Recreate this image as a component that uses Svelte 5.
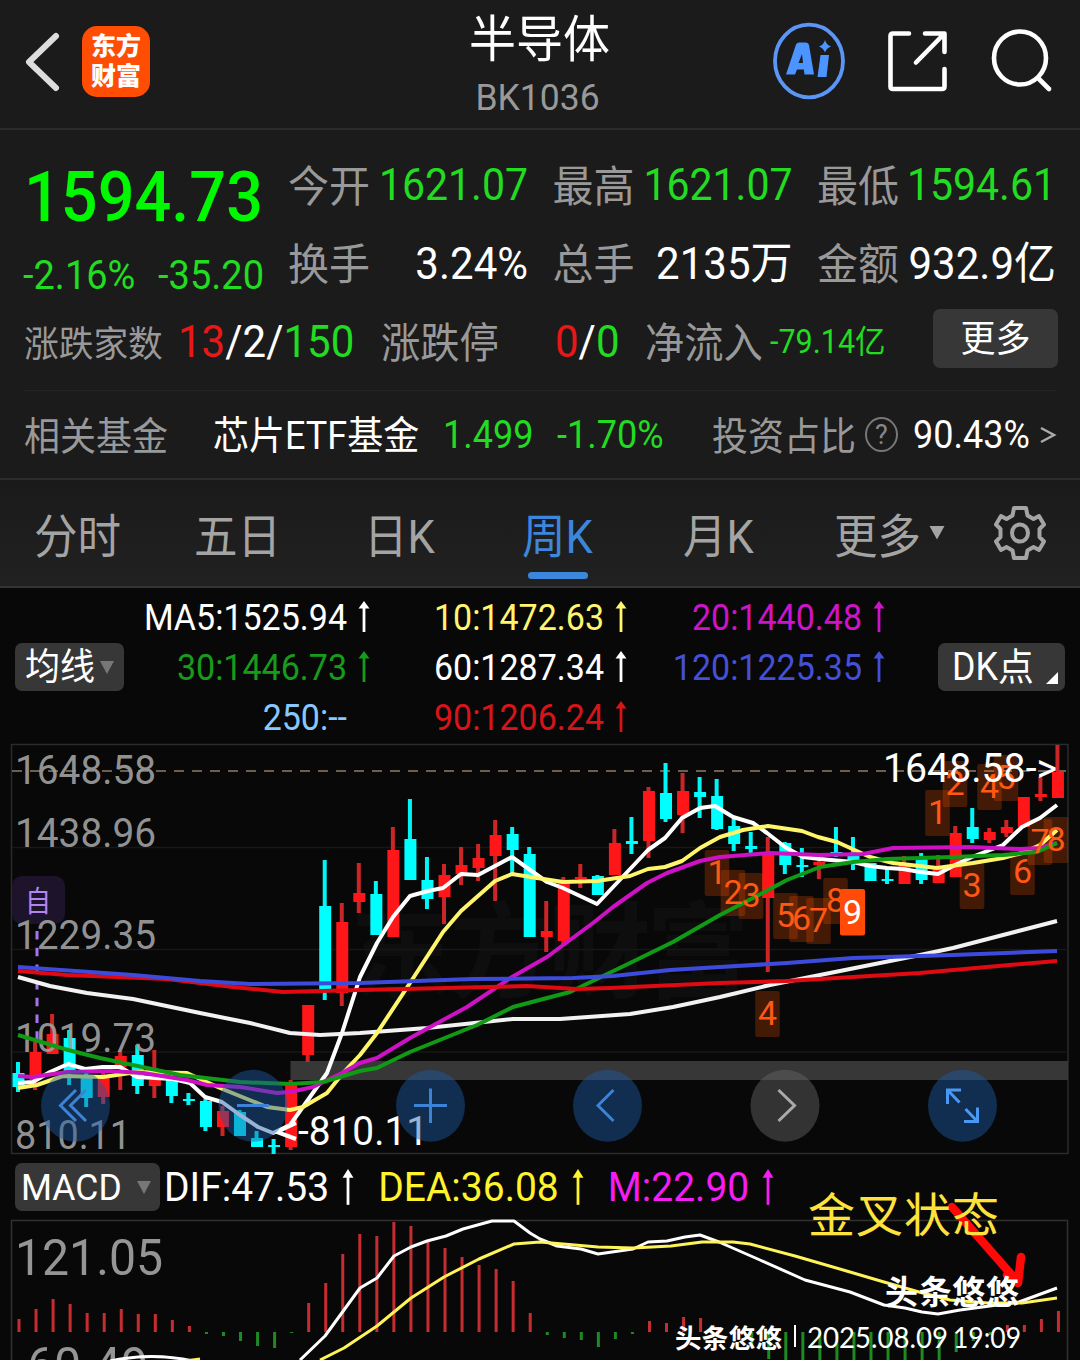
<script>
  const stats = [
    ['今开', '1621.07', 'down'], ['最高', '1621.07', 'down'], ['最低', '1594.61', 'down'],
    ['换手', '3.24%', 'flat'], ['总手', '2135万', 'flat'], ['金额', '932.9亿', 'flat']
  ];
  const tabs = ['分时', '五日', '日K', '周K', '月K'];

  const averages = [
    ['MA5:1525.94', 'white', true], ['10:1472.63', 'yellow', true], ['20:1440.48', 'magenta', true],
    ['30:1446.73', 'green', true], ['60:1287.34', 'white', true], ['120:1225.35', 'blue', true],
    ['250:--', 'sky', false], ['90:1206.24', 'red', true]
  ];
  const macd = [['DIF:47.53', 'white'], ['DEA:36.08', 'lemon'], ['M:22.90', 'pink']];

  const step = 17.04;
  const xAt = (i) => 18 + i * step;

  // [rising, high, low, body top, body bottom]
  const candles = [
    [0,1062,1092,1073,1087],[1,1042,1090,1052,1080],[1,1014,1054,1034,1054],[0,1030,1085,1038,1072],
    [0,1073,1107,1077,1098],[1,1073,1104,1078,1097],[1,1051,1090,1056,1067],[0,1045,1094,1055,1086],
    [1,1050,1098,1080,1086],[0,1075,1103,1078,1096],[0,1093,1105,1099,1101],[0,1099,1131,1101,1127],
    [1,1106,1136,1111,1127],[0,1110,1136,1112,1136],[0,1131,1147,1138,1147],[0,1139,1154,1145,1147],
    [1,1080,1150,1085,1147],[1,1005,1062,1005,1055],[0,860,1000,906,990],[1,903,1006,922,993],
    [1,863,913,893,902],[0,881,935,894,935],[1,827,937,850,937],[0,799,880,839,880],
    [0,857,909,880,899],[1,864,924,875,897],[1,847,885,865,874],[1,844,881,858,868],
    [1,820,901,835,856],[0,827,875,834,850],[0,847,937,854,937],[1,901,952,931,937],
    [1,877,944,883,941],[1,864,888,877,879],[0,875,895,876,895],[1,829,875,843,875],
    [0,817,854,841,844],[1,787,858,791,841],[0,763,822,793,819],[1,773,833,791,815],
    [0,777,818,792,797],[0,779,830,796,829],[0,819,851,826,844],[0,832,853,846,849],
    [1,837,972,855,898],[0,842,874,843,865],[0,848,877,865,867],[1,857,879,862,865],
    [0,827,857,852,855],[0,837,870,855,861],[0,863,881,863,881],[0,869,884,879,881],
    [1,856,884,863,884],[0,853,884,858,880],[1,855,883,868,883],[1,826,877,833,877],
    [0,808,843,827,839],[1,828,843,832,840],[1,820,837,827,833],[1,797,827,797,827],
    [1,777,801,794,797],[1,745,798,772,798]
  ];

  const lines = [
    ['#f2f2f2', '18,977 50,986 87,993 133,999 200,1013 250,1023 290,1033 320,1035 360,1033 427,1028 513,1019 560,1019 630,1014 673,1007 720,997 770,985 820,975 870,965 920,955 953,948 1003,935 1057,921'],
    ['#ffffff', '18,1083 33,1082 50,1072 68,1064 85,1069 103,1067 120,1067 137,1077 173,1079 190,1083 205,1097 222,1102 240,1115 258,1127 273,1133 290,1125 310,1097 327,1073 342,1033 360,977 377,943 393,917 410,896 428,891 443,888 461,874 478,875 512,857 547,882 563,888 597,904 632,867 648,850 665,838 682,818 700,808 715,806 733,817 753,823 767,833 785,847 803,857 820,859 853,862 870,866 887,868 903,869 920,872 938,874 955,865 972,857 1003,845 1022,827 1040,818 1057,805'],
    ['#fff56b', '18,1088 37,1085 63,1076 103,1077 137,1072 187,1073 220,1088 267,1107 290,1110 303,1107 327,1093 343,1073 360,1055 377,1033 410,983 443,932 461,911 495,881 512,874 537,878 563,882 597,881 630,876 648,869 665,867 682,861 700,848 720,837 743,830 768,826 802,831 818,837 837,842 870,857 893,863 937,868 973,863 1003,858 1022,853 1040,845 1057,830'],
    ['#cc12c4', '18,1076 33,1077 67,1072 110,1071 143,1073 187,1080 207,1085 240,1087 277,1093 290,1092 313,1087 342,1073 360,1063 377,1058 410,1038 467,1007 512,977 547,957 593,923 613,907 647,883 667,873 700,861 720,857 770,853 820,855 863,854 893,848 970,847 1020,849 1040,848 1057,843'],
    ['#119a15', '18,1035 68,1050 100,1058 133,1065 180,1075 240,1082 290,1084 323,1082 360,1071 377,1068 410,1052 477,1025 513,1007 570,992 630,963 673,942 720,915 753,898 787,880 820,867 853,862 887,859 953,857 1003,855 1037,852 1057,843'],
    ['#e00a12', '18,971 67,975 167,979 233,987 283,992 360,990 527,986 577,989 610,988 720,983 787,981 853,977 920,973 987,967 1057,961'],
    ['#3d4bdc', '18,967 133,975 200,981 250,984 360,983 473,979 573,978 613,976 670,970 720,967 787,963 853,958 953,955 1057,951']
  ];

  const axis = [['1648.58', 784, 139], ['1438.96', 847, 139], ['1229.35', 949, 139], ['1019.73', 1052, 139], ['810.11', 1149, 114]];

  // [digit, centre x, baseline]
  const counts = [
    [1,717,884],[2,733,904],[3,751,907],[4,767.5,1025],[5,785.5,927],[6,801.5,930],[7,818.5,932],[8,835.5,912],
    [1,937.5,824],[2,955,795],[3,972,897],[4,989.5,798],[5,1006,789],[6,1022.5,883],[7,1040,853],[8,1056,851]
  ];

  const zero = 1332;
  const bars = [
    1319,1309,1299,1304,1313,1313,1309,1314,1314,1320,1326,1334,1336,1341,1346,1348,1333,1303,1283,1254,1234,
    1236,1222,1226,1240,1248,1257,1265,1269,1281,1313,1335,1338,1340,1347,1339,1334,1321,1323,1317,1318,1327,
    1334,1346,1359,1366,1366,1366,1366,1366,1366,1366,1366,1366,1366,1352,1341,1335,1325,1325,1319,1311
  ];
</script>

{#snippet arrow()}
  <svg class="arrow" viewBox="0 0 12 32" preserveAspectRatio="none"><path d="M6 31V5" stroke="currentColor" stroke-width="2.8" /><path d="M6 0L11.500 7.500H0.500Z" fill="currentColor" /></svg>
{/snippet}

<div class="screen">
  <header>
    <svg class="back" viewBox="0 0 40 64"><path d="M35 6L8 32L35 58" /></svg>
    <div class="brand"><span>东方</span><span>财富</span></div>
    <div class="title"><h1>半导体</h1><p>BK1036</p></div>
    <svg class="actions" viewBox="765 15 300 92">
      <ellipse cx="809" cy="60" rx="34" ry="36.3" fill="none" stroke="#5b95f5" stroke-width="3.8" />
      <g fill="#4c94ff">
        <path fill-rule="evenodd" d="M796 43.5Q797 41.500 799 41.500H806Q808.500 41.500 809 44L814 73.500H804.500L803.8 68.500H797L795 73.500H786Z M798.5 62H803L802 53Z" />
        <path d="M820.5 54H829L826.5 76H817.5Z" />
        <path d="M825 39Q826.5 44 831 45.5Q826.5 47 825 51.5Q823.3 47 819 45.5Q823.5 44 825 39Z" />
      </g>
      <g fill="none" stroke="#fff" stroke-width="4.6" stroke-linecap="round" stroke-linejoin="round">
        <path d="M909 32.5H893Q890.5 32.5 890.5 35V85.500Q890.5 88 893 88H942Q944.500 88 944.500 85.500V68" />
        <path d="M925 32.500H944.500V51M944 33L916 61.500" />
        <ellipse cx="1020" cy="57" rx="26" ry="26.500" />
        <path d="M1038 77L1049 88" />
      </g>
    </svg>
  </header>

  <section class="quote">
    <div class="summary">
      <div class="last">
        <strong class="t">1594.73</strong>
        <div class="change"><span class="t">-2.16%</span><span class="t">-35.20</span></div>
      </div>
      <div class="stats">
        {#each stats as [label, value, tone]}
          <div class="stat"><span class="t label">{label}</span><span class="t {tone}">{value}</span></div>
        {/each}
      </div>
    </div>
    <div class="breadth">
      <span class="t label four">涨跌家数</span>
      <span class="t num"><i class="up">13</i>/2/<i class="down">150</i></span>
      <span class="t label">涨跌停</span>
      <span class="t num"><i class="up">0</i>/<i class="down">0</i></span>
      <span class="t label">净流入</span>
      <span class="t small down">-79.14亿</span>
      <button class="more"><span class="t">更多</span></button>
    </div>
    <div class="fund">
      <span class="t label">相关基金</span>
      <span class="t name">芯片ETF基金</span>
      <span class="t down">1.499</span>
      <span class="t down">-1.70%</span>
      <span class="t label">投资占比</span>
      <span class="help"><span>?</span></span>
      <span class="t">90.43%</span>
      <svg class="next" viewBox="0 0 18 20"><path d="M2 3L15 10L2 17" /></svg>
    </div>
  </section>

  <nav>
    {#each tabs as tab}
      <div class="tab" class:active={tab === '周K'}><span class="t">{tab}</span></div>
    {/each}
    <div class="tab wide"><span class="t">更多</span><svg viewBox="0 0 16 14"><path d="M0.500 0H15.500L8 13.500Z" /></svg></div>
    <svg class="gear" viewBox="-27 -28 54 56">
      <path d="M-6 -25H6L7.500 -17.500L13.500 -14L19 -17L24 -8.500L19.500 -4V4L24 8.500L19 17L13.500 14L7.500 17.500L6 25H-6L-7.500 17.500L-13.500 14L-19 17L-24 8.500L-19.500 4V-4L-24 -8.500L-19 -17L-13.500 -14L-7.500 -17.500Z" />
      <ellipse rx="8" ry="8.500" />
    </svg>
  </nav>

  <section class="legend">
    <button class="chip"><span class="t">均线</span><svg viewBox="0 0 14 13"><path d="M0 0H14L7 13Z" fill="#777" /></svg></button>
    <div class="averages">
      {#each averages as [text, tone, rising]}
        <div class="ma {tone}"><span class="t">{text}</span>{#if rising}{@render arrow()}{/if}</div>
      {/each}
    </div>
    <button class="chip dk"><span class="t">DK点</span><svg viewBox="0 0 12 12"><path d="M12 0V12H0Z" fill="#fff" /></svg></button>
  </section>

  <svg class="chart" viewBox="0 740 1080 420">
    <text x="350" y="990" class="mark" textLength="400">东方财富</text>
    <g fill="none" stroke="#2b2b2b" stroke-width="1.500">
      <rect x="11.500" y="744.500" width="1056.500" height="409" />
      <path d="M12 847.500H1068M12 949.500H1068M12 1052H1068" stroke="#171717" />
    </g>
    <path d="M12 771H1068" stroke="#8d7c68" stroke-width="1.600" stroke-dasharray="10 8" />
    <rect x="290.500" y="1061" width="777.500" height="19" fill="#373737" />
    <rect x="12" y="876" width="53" height="48" rx="10" fill="#1d142c" />
    {#each candles as [rising, high, low, top, bottom], i}
      <rect x={xAt(i) - 2} y={high} width="4" height={low - high} fill={rising ? '#cc2527' : '#00f6f6'} />
      <rect x={xAt(i) - 5.500} y={top} width="12" height={bottom - top} fill={rising ? '#ff1618' : '#00ffff'} />
    {/each}
    {#each axis as [label, y, width]}
      <text x="15" {y} class="axis" textLength={width + 2} lengthAdjust="spacingAndGlyphs">{label}</text>
    {/each}
    <path d="M37 931V1042" stroke="#a873ee" stroke-width="3" stroke-dasharray="8.500 8.200" />
    <text x="25" y="912" class="own" textLength="26" lengthAdjust="spacingAndGlyphs">自</text>
    {#each counts as [digit, x, y]}
      <rect x={x - 12.300} y={y - 34} width="24.600" height="46" rx="2" fill="#ff5200" fill-opacity=".24" />
    {/each}
    {#each lines as [stroke, points]}
      <polyline {points} fill="none" {stroke} stroke-width="4" stroke-linejoin="round" />
    {/each}
    {#each counts as [digit, x, y]}
      <text {x} {y} class="count">{digit}</text>
    {/each}
    <rect x="840" y="889" width="25" height="46.500" rx="2" fill="#ff4a08" />
    <text x="852.500" y="924" class="count solid">9</text>
    <text x="883" y="782" class="extreme" textLength="174" lengthAdjust="spacingAndGlyphs">1648.58-&gt;</text>
    <text x="298" y="1145" class="extreme" textLength="130" lengthAdjust="spacingAndGlyphs">-810.11</text>
    <path d="M296 1123L277 1132L296 1139" fill="none" stroke="#fff" stroke-width="4" />
    <g fill="#1d59a5" fill-opacity=".46">
      <ellipse cx="75.500" cy="1105.700" rx="34.500" ry="36" />
      <ellipse cx="253" cy="1105.700" rx="34.500" ry="36" />
      <ellipse cx="430.500" cy="1105.700" rx="34.500" ry="36" />
      <ellipse cx="607.500" cy="1105.700" rx="34.500" ry="36" />
      <ellipse cx="962.500" cy="1105.700" rx="34.500" ry="36" />
      <ellipse cx="785" cy="1105.700" rx="34.500" ry="36" fill="#666" />
    </g>
    <g fill="none" stroke="#3c82d6" stroke-width="3">
      <path d="M76 1090L60.500 1105.500L76 1121M86 1090L70.500 1105.500L86 1121" />
      <path d="M237 1105.500H269M414 1105.500H447M430.500 1088.500V1123" />
      <path d="M613.500 1090L598 1105.500L613.500 1121" />
      <path d="M778.500 1090L794.500 1105.500L778.500 1121" stroke="#aaa" />
      <path d="M961 1090H947.500V1104M948 1090.500L959.500 1102.500M964 1121.500H977.500V1107.500M977 1121L965.500 1109" stroke="#4a98f5" />
    </g>
  </svg>

  <div class="macdbar">
    <button class="chip macd"><span class="t">MACD</span><svg viewBox="0 0 14 13"><path d="M0 0H14L7 13Z" fill="#777" /></svg></button>
    {#each macd as [text, tone]}
      <div class="value {tone}"><span class="t">{text}</span>{@render arrow()}</div>
    {/each}
  </div>

  <svg class="chart" viewBox="0 1214 1080 146">
    <path d="M11.500 1360V1220.500H1067.500V1360" fill="none" stroke="#303030" stroke-width="1.500" />
    {#each bars as end, i}
      <rect x={xAt(i) - 0.500} y={Math.min(end, zero)} width="3" height={Math.abs(end - zero)} fill={end < zero ? '#c62d30' : '#1d8a24'} />
    {/each}
    <text x="15" y="1275" class="axis big" textLength="148" lengthAdjust="spacingAndGlyphs">121.05</text>
    <text x="27" y="1383" class="axis big" textLength="121" lengthAdjust="spacingAndGlyphs">60.49</text>
    <g fill="none" stroke-width="3" stroke-linejoin="round">
      <path d="M110 1361Q152 1352 193 1361" stroke="#fff" />
      <path d="M185 1361L200 1359" stroke="#fff35a" />
      <polyline stroke="#fff" points="300,1360 325,1336 360,1288 377,1278 394,1256 411,1247 427,1241 446,1236 463,1229 492,1221 514,1221 530,1233 540,1239 557,1246 581,1249 598,1254 633,1249 648,1242 667,1241 685,1237 700,1235 719,1242 760,1260 805,1280 850,1292 884,1305 905,1308 922,1312 938,1314 960,1310 1019,1302 1057,1288" />
      <polyline stroke="#fff35a" points="320,1360 344,1348 377,1326 411,1298 444,1277 479,1259 514,1244 540,1242 598,1247 633,1248 671,1246 702,1242 733,1242 750,1244 795,1256 850,1272 884,1282 919,1292 950,1300 988,1303 1022,1303 1057,1298" />
    </g>
  </svg>

  <svg class="notes" viewBox="660 1180 420 180">
    <path d="M952 1207L1017 1281M1021 1257L1018 1283L1007 1275" fill="none" stroke="#ff0808" stroke-width="8.500" stroke-linecap="round" stroke-linejoin="round" />
    <text x="808" y="1232" class="cross" textLength="191">金叉状态</text>
    <text x="885" y="1304" class="author" textLength="134">头条悠悠</text>
    <text x="675" y="1348" class="author low" textLength="107">头条悠悠</text>
    <path d="M795 1325V1347" stroke="#fff" stroke-width="2" />
    <text x="807" y="1348" class="date" textLength="141" lengthAdjust="spacingAndGlyphs">2025.08.09</text>
    <text x="953" y="1348" class="date" textLength="68" lengthAdjust="spacingAndGlyphs">19:09</text>
  </svg>
</div>

<style>
  :global(body) { background: #080808; overflow: hidden; }
  * { box-sizing: border-box; }
  .screen {
    position: relative; width: 1080px; height: 1360px; overflow: hidden;
    display: flex; flex-direction: column; background: #080808; color: #fff;
    font-family: Roboto, "Noto Sans CJK SC", sans-serif;
  }
  svg { display: block; flex: none; }
  i { font-style: normal; }
  button { border: 0; padding: 0; color: inherit; font: inherit; background: #373737; border-radius: 7px; }
  .t { display: inline-block; white-space: nowrap; transform: scaleY(1.06); }
  .label { color: #999; transform: translateY(2.5px) scaleY(1.06); }
  .name { transform: translateY(1px) scaleY(1.06); }
  .down { color: #22dc22; }
  .up { color: #e81818; }

  header { height: 130px; flex: none; display: grid; grid-template-columns: 82px 68px 1fr 315px; align-items: center; background: #1b1b1b; border-bottom: 2px solid #2b2b2b; padding: 0 0 9px 0; }
  .back { width: 40px; height: 64px; margin-left: 21px; }
  .back path { fill: none; stroke: #ddd; stroke-width: 6; stroke-linecap: round; stroke-linejoin: round; }
  .brand { height: 71px; border-radius: 15px; background: #ff4d04; display: flex; flex-direction: column; justify-content: center; align-items: center; font-size: 25px; font-weight: 900; line-height: 30px; }
  .title { display: flex; flex-direction: column; align-items: center; padding: 9px 0 0 164px; }
  h1 { margin: 0; font-size: 47px; font-weight: 400; line-height: 62px; transform: scaleY(1.06); }
  .title p { margin: 0 4px 0 0; font-size: 35.500px; line-height: 52px; color: #999; transform: scaleY(1.06); }
  .actions { width: 300px; height: 92px; }

  .quote { height: 350px; flex: none; background: #1b1b1b; border-bottom: 2px solid #2c2c2c; padding: 15px 24px 0; }
  .summary { display: flex; gap: 24px; height: 157px; }
  .last { width: 240px; flex: none; color: #00f800; }
  .last strong { display: block; font-size: 64.800px; font-weight: 500; line-height: 104px; transform: scaleY(1.1); }
  .change { display: flex; justify-content: space-between; font-size: 38px; line-height: 52px; color: #22dc22; margin-left: -1px; }
  .stats { display: grid; grid-template-columns: 240px 240px 239px; grid-auto-rows: 78px; column-gap: 24.500px; font-size: 41px; line-height: 80px; }
  .stat { display: flex; justify-content: space-between; }
  .flat { font-size: 42px; line-height: 81px; }
  .breadth { display: grid; grid-template-columns: 155px 202px 175px 89px 125px 163px 125px; align-items: center; height: 79px; font-size: 39.300px; line-height: 78px; }
  .four { font-size: 34.700px; }
  .num { font-size: 42px; margin-left: -1px; }
  .small { font-size: 30.500px; }
  .more { height: 59px; font-size: 35px; line-height: 62px; margin-top: -6px; }
  .fund { display: grid; grid-template-columns: 189px 230px 114px 155px 153px 48px 126px 18px; align-items: center; height: 88px; margin-top: 9px; border-top: 1px solid #232323; font-size: 36px; line-height: 84px; }
  .help { width: 33px; height: 35px; border: 2.500px solid #777; border-radius: 50%; display: flex; align-items: center; justify-content: center; color: #888; font-size: 27px; line-height: 30px; }
  .next { width: 18px; height: 20px; }
  .next path { fill: none; stroke: #aaa; stroke-width: 2.500; }

  nav { height: 108px; flex: none; display: grid; grid-template-columns: 160px 170px 158px 161px 151px 160px 60px; padding-left: 34px; background: linear-gradient(#1a1a1a, #212121); border-bottom: 2px solid #333; color: #a4a4a4; font-size: 43.500px; line-height: 116px; }
  .tab { position: relative; height: 106px; }
  .active { color: #3c86dc; }
  .active::after { content: ""; position: absolute; left: 6px; top: 92px; width: 60px; height: 7px; border-radius: 4px; background: #3c86dc; }
  .wide { display: flex; gap: 8px; }
  .wide svg { width: 16px; height: 14px; margin-top: 46px; fill: #a4a4a4; }
  .gear { width: 54px; height: 56px; margin: 25px 0 0 -1px; fill: none; stroke: #a4a4a4; stroke-width: 4; stroke-linejoin: round; }

  .legend { height: 152px; flex: none; display: grid; grid-template-columns: 124px 814px 127px; align-items: center; padding-top: 4px; font-size: 34px; }
  .chip { display: flex; align-items: center; height: 48px; padding-left: 10px; gap: 5px; font-size: 35px; line-height: 51px; }
  .legend .chip:first-child { margin-left: 15px; }
  .chip svg { width: 14px; height: 13px; }
  .dk { padding-left: 14px; gap: 12px; font-size: 35.800px; }
  .dk svg { width: 12px; height: 12px; margin-top: 22px; }
  .averages { display: grid; grid-template-columns: 246px 257px 258px; grid-auto-rows: 50px; line-height: 50px; }
  .ma { display: flex; justify-content: flex-end; align-items: center; }
  .arrow { width: 12px; height: 32px; margin-left: 11px; }
  .sky { padding-right: 23px; color: #86c8ff; }
  .yellow { color: #fff56e; }
  .magenta { color: #cd14c8; }
  .green { color: #179b1b; }
  .blue { color: #4450d8; }
  .red { color: #d71518; }
  .lemon { color: #fff32e; }
  .pink { color: #f51df5; }

  .chart { width: 1080px; }
  .mark { font-size: 104px; font-weight: 700; fill: #0e0e0e; }
  .axis { font-size: 40px; fill: #a0a0a0; fill-opacity: .93; }
  .big { font-size: 50px; }
  .own { font-size: 29px; fill: #b184f2; }
  .count { font-size: 34px; fill: #ff5814; text-anchor: middle; }
  .solid { fill: #fff; }
  .extreme { font-size: 41px; fill: #fff; }

  .macdbar { height: 54px; flex: none; display: flex; align-items: center; padding: 0 0 0 15px; font-size: 39px; line-height: 54px; }
  .macd { width: 145px; padding-left: 6px; gap: 15px; margin-right: 4px; font-size: 35.500px; line-height: 48px; }
  .value { display: flex; align-items: center; }
  .value .arrow { width: 12px; height: 37px; margin: 0 24px 0 13px; }

  .notes { position: absolute; left: 660px; top: 1180px; width: 420px; height: 180px; }
  .cross { font-size: 47px; font-weight: 400; fill: #ffe23c; }
  .author { font-size: 33px; font-weight: 700; fill: #fff; }
  .low { font-size: 26.500px; }
  .date { font-family: Lato, Roboto, sans-serif; font-size: 29px; fill: #fff; }
</style>
